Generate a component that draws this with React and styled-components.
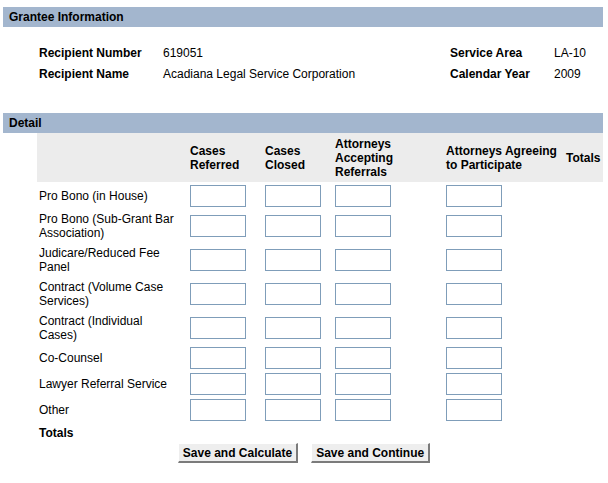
import React from 'react';
import styled, { createGlobalStyle } from 'styled-components';

const GlobalStyle = createGlobalStyle`
  body {
    margin: 0;
    background: #ffffff;
    font-family: "Liberation Sans", Arial, sans-serif;
    font-size: 12px;
    color: #000000;
  }
`;

const Page = styled.div`
  width: 600px;
  padding: 7px 5px 0 3px;
`;

const SectionBar = styled.div`
  height: 20px;
  line-height: 21px;
  padding-left: 6px;
  background-color: #a3b6ce;
  font-weight: bold;
  font-size: 12px;
`;

const InfoGrid = styled.div`
  display: grid;
  grid-template-columns: 124px 287px 104px 1fr;
  grid-auto-rows: 21px;
  align-items: center;
  margin: 15px 0 29px 36px;
`;

const InfoLabel = styled.div`
  font-weight: bold;
`;

const InfoValue = styled.div``;

const DetailGrid = styled.div`
  display: grid;
  grid-template-columns: 151px 75px 70px 111px 120px 1fr;
  margin-left: 34px;
`;

const HeadCell = styled.div`
  height: 49px;
  margin-bottom: 1px;
  background-color: #ececec;
  display: flex;
  align-items: center;
  padding-left: 2px;
  font-weight: bold;
  line-height: 14px;
`;

const LabelCell = styled.div`
  display: flex;
  align-items: center;
  padding: 3px 2px;
  line-height: 14px;
  font-weight: ${p => (p.$bold ? 'bold' : 'normal')};
`;

const BoxCell = styled.div`
  display: flex;
  align-items: center;
  padding: 2px 0 2px 2px;
`;

const NumberBox = styled.input`
  box-sizing: border-box;
  width: 56px;
  height: 22px;
  margin: 0;
  border: 1px solid #7f9db9;
  background: #ffffff;
  font-family: "Liberation Sans", Arial, sans-serif;
  font-size: 12px;
  padding: 1px 3px;
`;

const ButtonRow = styled.div`
  display: flex;
  justify-content: center;
  gap: 13px;
  padding-left: 2px;
`;

const Button = styled.button`
  box-sizing: border-box;
  height: 20px;
  padding: 0 4px;
  background-color: #eeeeee;
  border-top: 1px solid #ffffff;
  border-left: 1px solid #ffffff;
  border-right: 2px solid #7b7b7b;
  border-bottom: 2px solid #7b7b7b;
  font-family: "Liberation Sans", Arial, sans-serif;
  font-weight: bold;
  font-size: 12px;
  color: #000000;
`;

const headers = [
  '',
  ['Cases', 'Referred'],
  ['Cases', 'Closed'],
  ['Attorneys', 'Accepting', 'Referrals'],
  ['Attorneys Agreeing', 'to Participate'],
  ['Totals'],
];

const rows = [
  ['Pro Bono (in House)'],
  ['Pro Bono (Sub-Grant Bar', 'Association)'],
  ['Judicare/Reduced Fee', 'Panel'],
  ['Contract (Volume Case', 'Services)'],
  ['Contract (Individual', 'Cases)'],
  ['Co-Counsel'],
  ['Lawyer Referral Service'],
  ['Other'],
];

const Lines = ({ lines }) => (
  <div>
    {lines.map((l, i) => (
      <div key={i}>{l}</div>
    ))}
  </div>
);

export default function App() {
  return (
    <Page>
      <GlobalStyle />
      <SectionBar>Grantee Information</SectionBar>
      <InfoGrid>
        <InfoLabel>Recipient Number</InfoLabel>
        <InfoValue>619051</InfoValue>
        <InfoLabel>Service Area</InfoLabel>
        <InfoValue>LA-10</InfoValue>
        <InfoLabel>Recipient Name</InfoLabel>
        <InfoValue>Acadiana Legal Service Corporation</InfoValue>
        <InfoLabel>Calendar Year</InfoLabel>
        <InfoValue>2009</InfoValue>
      </InfoGrid>

      <SectionBar>Detail</SectionBar>
      <DetailGrid>
        {headers.map((h, i) => (
          <HeadCell key={i}>{h ? <Lines lines={h} /> : null}</HeadCell>
        ))}
        {rows.map((r, i) => (
          <React.Fragment key={i}>
            <LabelCell>
              <Lines lines={r} />
            </LabelCell>
            <BoxCell><NumberBox type="text" /></BoxCell>
            <BoxCell><NumberBox type="text" /></BoxCell>
            <BoxCell><NumberBox type="text" /></BoxCell>
            <BoxCell><NumberBox type="text" /></BoxCell>
            <BoxCell />
          </React.Fragment>
        ))}
        <LabelCell $bold>Totals</LabelCell>
        <LabelCell />
        <LabelCell />
        <LabelCell />
        <LabelCell />
        <LabelCell />
      </DetailGrid>
      <ButtonRow>
        <Button>Save and Calculate</Button>
        <Button>Save and Continue</Button>
      </ButtonRow>
    </Page>
  );
}
